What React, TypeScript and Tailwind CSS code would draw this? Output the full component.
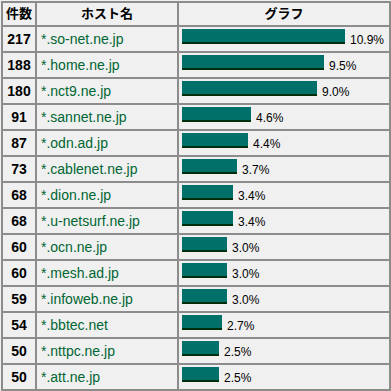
import React from "react";

const rows: [number, string, number][] = [
  [217, "*.so-net.ne.jp", 10.9],
  [188, "*.home.ne.jp", 9.5],
  [180, "*.nct9.ne.jp", 9.0],
  [91, "*.sannet.ne.jp", 4.6],
  [87, "*.odn.ad.jp", 4.4],
  [73, "*.cablenet.ne.jp", 3.7],
  [68, "*.dion.ne.jp", 3.4],
  [68, "*.u-netsurf.ne.jp", 3.4],
  [60, "*.ocn.ne.jp", 3.0],
  [60, "*.mesh.ad.jp", 3.0],
  [59, "*.infoweb.ne.jp", 3.0],
  [54, "*.bbtec.net", 2.7],
  [50, "*.nttpc.ne.jp", 2.5],
  [50, "*.att.ne.jp", 2.5],
];

export default function App() {
  return (
    <div className="w-[391px] h-[391px] bg-[#f0f0f0] pt-[1px] pl-[1px] overflow-hidden font-['Liberation_Sans','Noto_Sans_CJK_JP',sans-serif]">
      <div className="grid grid-cols-[32px_140px_210px] grid-rows-[22px_repeat(14,24px)] gap-[2px] bg-[#8c8c8c] p-[2px] w-[390px]">
        <div className="bg-[#f0f0f0] flex items-center justify-center text-[13px] font-bold text-black">件数</div>
        <div className="bg-[#f0f0f0] flex items-center justify-center text-[13px] font-bold text-black">ホスト名</div>
        <div className="bg-[#f0f0f0] flex items-center justify-center text-[13px] font-bold text-black">グラフ</div>
        {rows.map(([n, host, p], i) => (
          <React.Fragment key={i}>
            <div className="bg-[#f0f0f0] flex items-center justify-center text-[14px] font-bold text-black">{n}</div>
            <div className="bg-[#f0f0f0] flex items-center pl-[4px] text-[14px] text-[#006633] whitespace-nowrap">{host}</div>
            <div className="bg-[#f0f0f0] pl-[3px] pt-[2px]">
              <div className="flex items-baseline">
                <div className="h-[15px] bg-[#007068] border-b-2 border-[#002d0a]" style={{ width: Math.floor(p * 15 + 0.01) }} />
                <span className="ml-[5px] text-[12px] leading-[14px] text-black">{p.toFixed(1)}%</span>
              </div>
            </div>
          </React.Fragment>
        ))}
      </div>
    </div>
  );
}
